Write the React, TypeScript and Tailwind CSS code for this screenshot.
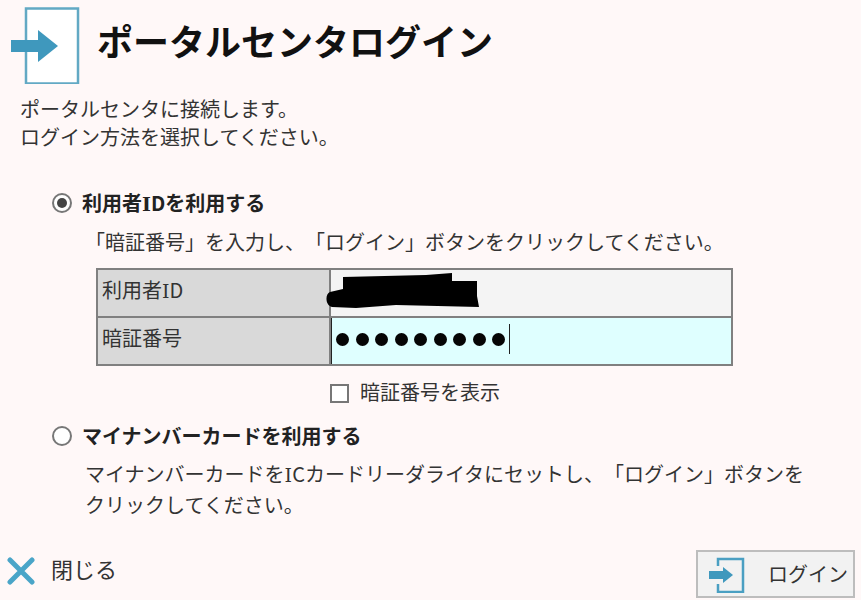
function SlabI() {
  return <span className="font-['DejaVu_Serif'] text-[19px] leading-[0]">I</span>;
}

export default function App() {
  const dots = Array.from({ length: 9 });
  return (
    <div className="w-[861px] h-[600px] overflow-hidden bg-[#fff8f8] flex flex-col text-[#333] text-[20px] leading-[28px] [text-spacing-trim:space-all]" style={{ fontFamily: '"Noto Sans CJK JP", "Noto Sans", sans-serif' }}>
      <div className="flex items-center h-[84px] pt-[4px]">
        <svg width="72" height="80" viewBox="0 0 72 80" className="ml-[9px] shrink-0">
          <rect x="17" y="4.500" width="52" height="75" fill="#ffffff" stroke="#62a9c4" strokeWidth="2.500" />
          <path d="M2 36h27V26l20 16-20 16V48H2z" fill="#3f98bd" />
        </svg>
        <h1 className="ml-[16px] text-[36px] leading-[44px] font-bold text-[#111] -mt-[8px]">ポータルセンタログイン</h1>
      </div>
      <p className="ml-[20px] mt-[11px]">ポータルセンタに接続します。<br />ログイン方法を選択してください。</p>

      <div className="ml-[52px] mt-[38px] flex items-center h-[28px]">
        <span className="w-[20px] h-[20px] rounded-full border-2 border-[#777] flex items-center justify-center bg-white">
          <span className="w-[10px] h-[10px] rounded-full bg-[#444]" />
        </span>
        <span className="ml-[10px] font-bold text-[#222]">利用者<SlabI />Dを利用する</span>
      </div>
      <p className="ml-[85px] mt-[11px]">「暗証番号」を入力し、「ログイン」ボタンをクリックしてください。</p>

      <div className="ml-[96px] mt-[12px] w-[637px] border-2 border-[#808080] grid grid-cols-[233px_1fr] grid-rows-[46px_46px] gap-y-[2px] bg-[#808080]">
        <div className="bg-[#d9d9d9] flex items-center pl-[4px] pb-[6px] border-r-2 border-[#808080]"><span>利用者<SlabI />D</span></div>
        <div className="bg-[#f4f4f4] relative">
          <svg width="154" height="36" viewBox="0 0 154 36" className="absolute left-[-5px] top-[2px]">
            <path d="M17 5 L100 3 L126 1 L126 9 L151 9 L151 24 L153 35 L70 33 L30 36 L6 35 C-1 33 -1 22 4 20 L17 17 Z" fill="#000" />
          </svg>
        </div>
        <div className="bg-[#d9d9d9] flex items-center pl-[4px] pb-[6px] border-r-2 border-[#808080]">暗証番号</div>
        <div className="bg-[#dfffff] flex items-center pl-[4px] pb-[4px] gap-[6.500px] border-l border-[#222]">
          {dots.map((_, i) => (
            <span key={i} className="w-[13px] h-[13px] rounded-full bg-[#050505]" />
          ))}
          <span className="w-px h-[30px] bg-[#222] -ml-[3px]" />
        </div>
      </div>

      <div className="ml-[330px] mt-[13px] flex items-center h-[28px]">
        <span className="w-[19px] h-[19px] border-2 border-[#777] bg-white" />
        <span className="ml-[11px] -mt-[2px]">暗証番号を表示</span>
      </div>

      <div className="ml-[52px] mt-[15px] flex items-center h-[28px]">
        <span className="w-[20px] h-[20px] rounded-full border-2 border-[#777] bg-white" />
        <span className="ml-[10px] font-bold text-[#222]">マイナンバーカードを利用する</span>
      </div>
      <p className="ml-[85px] mt-[8px] w-[750px] leading-[31px]">マイナンバーカードを<SlabI />Cカードリーダライタにセットし、「ログイン」ボタンを<br />クリックしてください。</p>

      <div className="mt-[30px] flex items-start justify-between pr-[6px]">
        <div className="flex items-center ml-[7px] mt-[7px]">
          <svg width="28" height="28" viewBox="0 0 28 28">
            <path d="M3 3 L25 25 M25 3 L3 25" stroke="#4aa5c8" strokeWidth="5" strokeLinecap="round" />
          </svg>
          <span className="ml-[16px] text-[22px] text-[#333] -mt-[6px]">閉じる</span>
        </div>
        <button className="w-[159px] h-[48px] border-2 border-[#bdbdbd] bg-[#f2f2f2] flex items-center text-[#333]">
          <svg width="38" height="38" viewBox="0 0 38 38" className="ml-[11px] shrink-0">
            <path d="M9 11V4h25v33H9v-8" fill="none" stroke="#4a9fc2" strokeWidth="2.500" />
            <path d="M0 16h14v-4l10 8-10 8v-4H0z" fill="#3f98bd" />
          </svg>
          <span className="ml-[21px] -mt-[1px]">ログイン</span>
        </button>
      </div>
    </div>
  );
}
